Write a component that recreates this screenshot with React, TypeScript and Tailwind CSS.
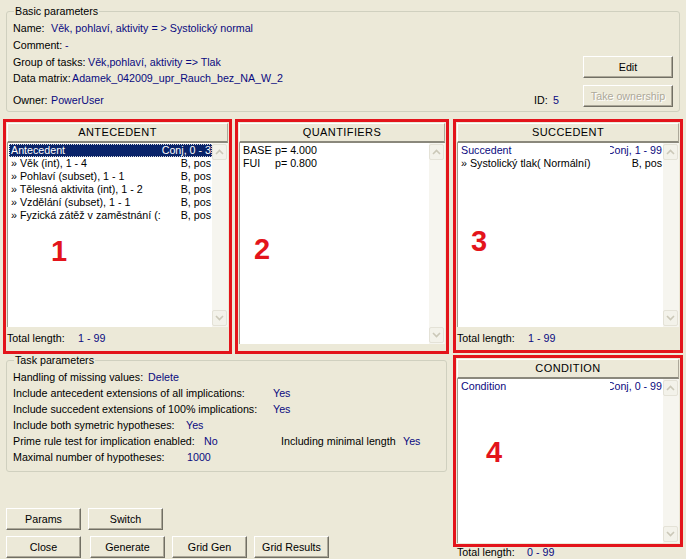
import type { ReactNode } from "react";

const NAVY = "text-[#0a0a80]";

function Btn({ children, className = "", disabled }: { children: ReactNode; className?: string; disabled?: boolean }) {
  return (
    <button
      className={`flex h-[22px] items-center justify-center whitespace-nowrap border border-t-white border-l-white border-r-[#716f64] border-b-[#716f64] bg-[#ece9d8] shadow-[inset_-1px_-1px_0_#aca899] ${
        disabled ? "text-[#aca899] [text-shadow:1px_1px_0_#ffffff]" : "text-black"
      } ${className}`}
    >
      {children}
    </button>
  );
}

function Arrow({ up }: { up?: boolean }) {
  return (
    <div className="flex h-[16px] w-[15px] items-center justify-center rounded-[2px] border border-[#e4e2d7] bg-[#f3f2ea]">
      <svg width="9" height="6" viewBox="0 0 9 6">
        <path
          d={up ? "M1 5 L4.5 1.5 L8 5" : "M1 1 L4.5 4.5 L8 1"}
          fill="none"
          stroke="#cbc8b8"
          strokeWidth="1.6"
        />
      </svg>
    </div>
  );
}

function ScrollBar() {
  return (
    <div className="flex w-[16px] shrink-0 flex-col justify-between bg-[#f6f5ef] py-px">
      <Arrow up />
      <Arrow />
    </div>
  );
}

function Header({ title }: { title: string }) {
  return (
    <div className="flex h-[20px] shrink-0 items-center justify-center border-t border-l border-t-white border-l-white border-b-2 border-b-[#8a887c] border-r border-r-[#aca899] bg-[#ece9d8] pb-px text-[11px] tracking-[0.4px]">
      {title}
    </div>
  );
}

type Row = { left: string; right?: string; head?: boolean; selected?: boolean };

function ListRows({ rows, colW, clip }: { rows: Row[]; colW: string; clip: boolean }) {
  return (
    <div className="flex min-w-0 flex-1 flex-col pt-px pl-px">
      {rows.map((r, i) => (
        <div
          key={i}
          className={`flex h-[13px] items-center whitespace-nowrap pl-[2px] ${
            r.selected
              ? "bg-[#0a246a] text-white outline-1 outline-dotted outline-offset-[-1px] outline-[#d8d8d8]"
              : r.head
              ? NAVY
              : "text-black"
          }`}
        >
          <span className="min-w-0 flex-1">{r.left}</span>
          {r.right && (
            <span className={`flex shrink-0 justify-end pr-px ${clip ? "overflow-hidden" : ""} ${colW}`}>
              <span className="whitespace-nowrap">{r.right}</span>
            </span>
          )}
        </div>
      ))}
    </div>
  );
}

function ListPanel({
  title,
  rows,
  colW,
  boxH,
  listH,
  total,
  clip = true,
}: {
  title: string;
  rows: Row[];
  colW: string;
  boxH: string;
  listH: string;
  total?: string;
  clip?: boolean;
}) {
  return (
    <div className={`flex flex-col border-[3px] border-[#e3141b] bg-[#ece9d8] p-px ${boxH}`}>
      <Header title={title} />
      <div className={`flex overflow-hidden border-l border-[#9d9b90] bg-white ${listH}`}>
        <ListRows rows={rows} colW={colW} clip={clip} />
        <ScrollBar />
      </div>
      {total && (
        <div className="flex flex-1 items-center whitespace-nowrap">
          <span className="w-[71px]">Total length:</span>
          <span className={NAVY}>{total}</span>
        </div>
      )}
    </div>
  );
}

function BigNum({ n, className }: { n: string; className: string }) {
  return (
    <div className={`absolute text-[29px] leading-none font-bold text-[#e3141b] ${className}`}>{n}</div>
  );
}

export default function App() {
  return (
    <div className="relative h-[559px] w-[686px] overflow-hidden bg-[#ece9d8] font-['Liberation_Sans',Arial,sans-serif] text-[10.7px] leading-[13px] text-black">
      {/* Basic parameters */}
      <fieldset className="mt-[5px] ml-[6px] h-[107px] w-[674px] rounded-[3px] border border-[#d0d0bf]">
        <legend className="ml-[7px] px-px leading-[13px]">Basic parameters</legend>
        <div className="flex whitespace-nowrap">
          <div className="flex flex-1 flex-col pt-[2px] pl-[6px]">
            <div className="flex h-[17px] items-center">
              <span className="w-[38px] shrink-0">Name:</span>
              <span className={NAVY}>Věk, pohlaví, aktivity = &gt; Systolický normal</span>
            </div>
            <div className="flex h-[17px] items-center">
              <span className="w-[52px] shrink-0">Comment:</span>
              <span className={NAVY}>-</span>
            </div>
            <div className="flex h-[16px] items-center">
              <span className="w-[75px] shrink-0">Group of tasks:</span>
              <span className={NAVY}>Věk,pohlaví, aktivity =&gt; Tlak</span>
            </div>
            <div className="flex h-[17px] items-center">
              <span className="w-[59px] shrink-0">Data matrix:</span>
              <span className={NAVY}>Adamek_042009_upr_Rauch_bez_NA_W_2</span>
            </div>
            <div className="mt-[5px] flex h-[17px] items-center">
              <span className="w-[38px] shrink-0">Owner:</span>
              <span className={NAVY}>PowerUser</span>
            </div>
          </div>
          <div className="flex h-[17px] w-[49px] items-center self-end">
            <span className="w-[19px]">ID:</span>
            <span className={NAVY}>5</span>
          </div>
          <div className="mt-[38px] mr-[6px] flex w-[90px] flex-col gap-[7px]">
            <Btn className="h-[21px]">Edit</Btn>
            <Btn className="h-[21px]" disabled>
              Take ownership
            </Btn>
          </div>
        </div>
      </fieldset>

      <div className="flex">
        {/* left column */}
        <div className="flex w-[453px] flex-col">
          <div className="mt-[7px] flex gap-[3px] pl-[3px]">
            <div className="w-[229px]">
              <ListPanel
                title="ANTECEDENT"
                boxH="h-[235px]"
                listH="h-[184px]"
                colW="w-[40px]"
                clip={false}
                total="1 - 99"
                rows={[
                  { left: "Antecedent", right: "Conj, 0 - 3", selected: true },
                  { left: "» Věk (int), 1 - 4", right: "B, pos" },
                  { left: "» Pohlaví (subset), 1 - 1", right: "B, pos" },
                  { left: "» Tělesná aktivita (int), 1 - 2", right: "B, pos" },
                  { left: "» Vzdělání (subset), 1 - 1", right: "B, pos" },
                  { left: "» Fyzická zátěž v zaměstnání (:", right: "B, pos" },
                ]}
              />
            </div>
            <div className="flex h-[235px] w-[214px] flex-col border-[3px] border-[#e3141b] bg-[#ece9d8] p-px">
              <Header title="QUANTIFIERS" />
              <div className="flex h-[201px] border-l border-[#9d9b90] bg-white">
                <div className="flex flex-1 flex-col pt-px pl-[3px] whitespace-nowrap">
                  <div className="flex h-[13px] items-center">
                    <span className="w-[32px]">BASE</span>
                    <span>p= 4.000</span>
                  </div>
                  <div className="flex h-[13px] items-center">
                    <span className="w-[32px]">FUI</span>
                    <span>p= 0.800</span>
                  </div>
                </div>
                <ScrollBar />
              </div>
            </div>
          </div>

          {/* Task parameters */}
          <fieldset className="ml-[6px] h-[118px] w-[441px] rounded-[3px] border border-[#d0d0bf]">
            <legend className="ml-[7px] px-px leading-[13px]">Task parameters</legend>
            <div className="flex flex-col pt-[2px] pl-[6px] whitespace-nowrap">
              <div className="flex h-[16px] items-center">
                <span className="w-[135px] shrink-0">Handling of missing values:</span>
                <span className={NAVY}>Delete</span>
              </div>
              <div className="flex h-[16px] items-center">
                <span className="w-[260px] shrink-0">Include antecedent extensions of all implications:</span>
                <span className={NAVY}>Yes</span>
              </div>
              <div className="flex h-[16px] items-center">
                <span className="w-[260px] shrink-0">Include succedent extensions of 100% implications:</span>
                <span className={NAVY}>Yes</span>
              </div>
              <div className="flex h-[16px] items-center">
                <span className="w-[173px] shrink-0">Include both symetric hypotheses:</span>
                <span className={NAVY}>Yes</span>
              </div>
              <div className="flex h-[16px] items-center">
                <span className="w-[191px] shrink-0">Prime rule test for implication enabled:</span>
                <span className={`w-[77px] shrink-0 ${NAVY}`}>No</span>
                <span className="w-[122px] shrink-0">Including minimal length</span>
                <span className={NAVY}>Yes</span>
              </div>
              <div className="flex h-[16px] items-center">
                <span className="w-[174px] shrink-0">Maximal number of hypotheses:</span>
                <span className={NAVY}>1000</span>
              </div>
            </div>
          </fieldset>

          {/* buttons */}
          <div className="mt-[36px] flex flex-col gap-[6px] pl-[6px]">
            <div className="flex gap-[7px]">
              <Btn className="w-[75px]">Params</Btn>
              <Btn className="w-[75px]">Switch</Btn>
            </div>
            <div className="flex">
              <Btn className="w-[75px]">Close</Btn>
              <Btn className="ml-[9px] w-[75px]">Generate</Btn>
              <Btn className="ml-[7px] w-[75px]">Grid Gen</Btn>
              <Btn className="ml-[7px] w-[75px]">Grid Results</Btn>
            </div>
          </div>
        </div>

        {/* right column */}
        <div className="flex w-[230px] flex-col">
          <div className="mt-[7px]">
            <ListPanel
              title="SUCCEDENT"
              boxH="h-[234px]"
              listH="h-[184px]"
              colW="w-[53px]"
              total="1 - 99"
              rows={[
                { left: "Succedent", right: "Conj, 1 - 99", head: true },
                { left: "» Systolický tlak( Normální)", right: "B, pos" },
              ]}
            />
          </div>
          <div className="mt-[2px]">
            <ListPanel
              title="CONDITION"
              boxH="h-[192px]"
              listH="h-[164px]"
              colW="w-[53px]"
              rows={[{ left: "Condition", right: "Conj, 0 - 99", head: true }]}
            />
          </div>
          <div className="-mt-[1px] flex h-[12px] items-center leading-[12px] whitespace-nowrap">
            <span className="w-[74px] pl-[4px]">Total length:</span>
            <span className={NAVY}>0 - 99</span>
          </div>
        </div>
      </div>

      <BigNum n="1" className="top-[237px] left-[51px]" />
      <BigNum n="2" className="top-[235px] left-[254px]" />
      <BigNum n="3" className="top-[227px] left-[471px]" />
      <BigNum n="4" className="top-[438px] left-[486px]" />
    </div>
  );
}
